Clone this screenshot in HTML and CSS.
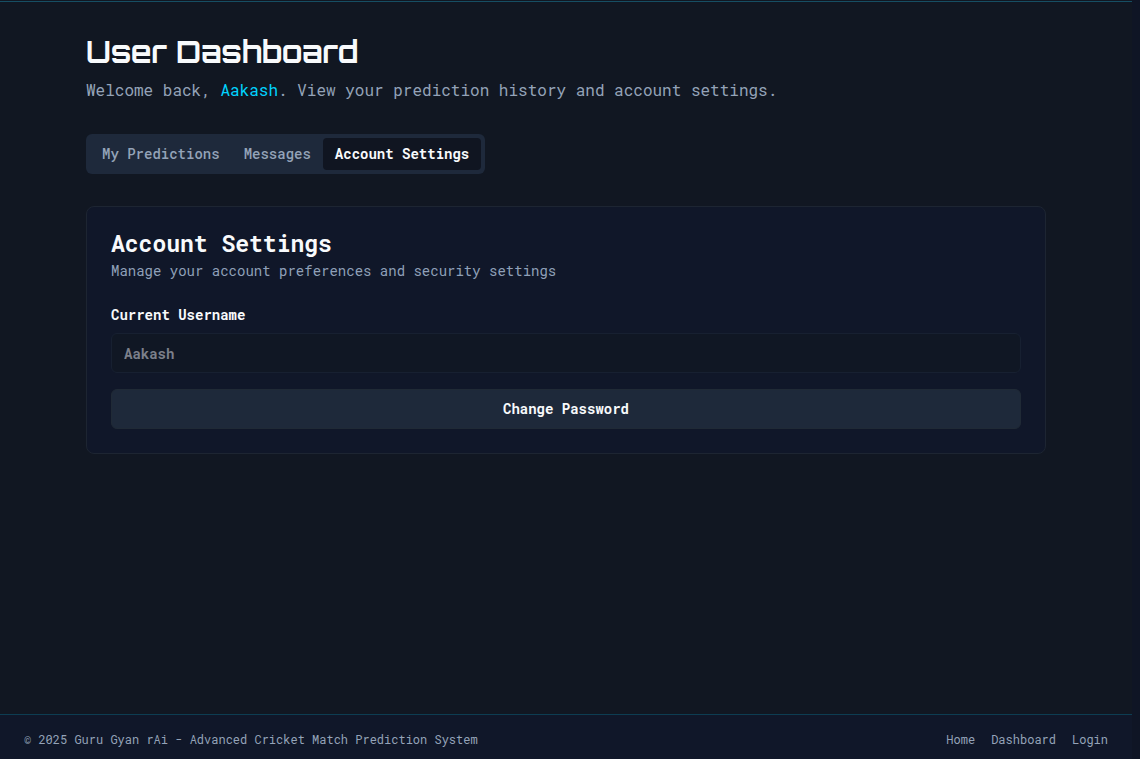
FILE: index.html
```html
<!DOCTYPE html>
<html lang="en">
<head>
<meta charset="utf-8">
<meta name="viewport" content="width=device-width, initial-scale=1">
<title>User Dashboard</title>
<link rel="stylesheet" href="styles.css">
</head>
<body>
<div class="page">
  <main class="main">
    <div class="container">
      <header class="intro">
        <h1 class="intro-title">User Dashboard</h1>
        <p class="intro-text">Welcome back, <span class="accent">Aakash</span>. View your prediction history and account settings.</p>
      </header>
      <div class="tabs" role="tablist">
        <button class="tab" type="button" role="tab" aria-selected="false">My Predictions</button>
        <button class="tab" type="button" role="tab" aria-selected="false">Messages</button>
        <button class="tab tab-active" type="button" role="tab" aria-selected="true">Account Settings</button>
      </div>
      <section class="card">
        <h2 class="card-title">Account Settings</h2>
        <p class="card-text">Manage your account preferences and security settings</p>
        <form class="form">
          <div class="field">
            <label class="label" for="username">Current Username</label>
            <input class="input" id="username" type="text" value="Aakash" disabled>
          </div>
          <button class="button" type="button">Change Password</button>
        </form>
      </section>
    </div>
  </main>
  <footer class="footer">
    <p class="copyright">© 2025 Guru Gyan rAi - Advanced Cricket Match Prediction System</p>
    <nav class="links">
      <a class="link" href="#home">Home</a>
      <a class="link" href="#dashboard">Dashboard</a>
      <a class="link" href="#login">Login</a>
    </nav>
  </footer>
</div>
</body>
</html>
```
FILE: styles.css
```css
* {
  box-sizing: border-box;
}

body {
  margin: 0;
  padding-right: 8px;
  background: #0f1525;
  color: #f8fafc;
  font-family: "Roboto Mono", "DejaVu Sans Mono", monospace;
  font-size: 14px;
  line-height: 20px;
}

h1, h2, p {
  margin: 0;
}

button, input {
  font: inherit;
  color: inherit;
}

.page {
  display: flex;
  flex-direction: column;
  min-height: 100vh;
  padding-top: 1px;
  background: #111722;
}

.main {
  flex: 1;
  padding: 32px;
  border-top: 1px solid #164e63;
}

.container {
  max-width: 960px;
  margin: 0 auto;
}

.intro-title {
  font-family: Orbitron, "DejaVu Sans", sans-serif;
  font-size: 30px;
  line-height: 36px;
  font-weight: 700;
}

.intro-text {
  margin-top: 8px;
  font-size: 16px;
  line-height: 24px;
  color: #94a3b8;
}

.accent {
  color: #00d4ff;
}

.tabs {
  display: inline-flex;
  margin: 32px 0;
  padding: 4px;
  border-radius: 6px;
  background: #1e293b;
  vertical-align: top;
}

.tab {
  padding: 6px 12px;
  border: 0;
  border-radius: 4px;
  background: transparent;
  color: #94a3b8;
  font-weight: 500;
}

.tab-active {
  background: #101521;
  color: #f8fafc;
  font-weight: 700;
}

.card {
  padding: 24px;
  border: 1px solid #1d2532;
  border-radius: 8px;
  background: #101729;
}

.card-title {
  font-size: 23px;
  line-height: 24px;
  font-weight: 700;
}

.card-text {
  margin-top: 6px;
  color: #8fa0b8;
}

.form {
  display: grid;
  gap: 16px;
  margin-top: 24px;
}

.field {
  display: grid;
  gap: 8px;
}

.label {
  font-weight: 700;
}

.input {
  width: 100%;
  height: 40px;
  padding: 8px 12px;
  border: 1px solid #172031;
  border-radius: 6px;
  background: #101724;
  color: #7c808b;
  font-weight: 700;
}

.button {
  height: 40px;
  border: 1px solid #202a36;
  border-radius: 6px;
  background: #1e293a;
  font-weight: 700;
}

.footer {
  display: flex;
  justify-content: space-between;
  padding: 16px 24px 12px;
  border-top: 1px solid #0d3d52;
  background: #101729;
  color: #94a3b8;
  font-size: 12px;
  line-height: 16px;
}

.links {
  display: flex;
  gap: 16px;
}

.link {
  color: inherit;
  text-decoration: none;
}
```
